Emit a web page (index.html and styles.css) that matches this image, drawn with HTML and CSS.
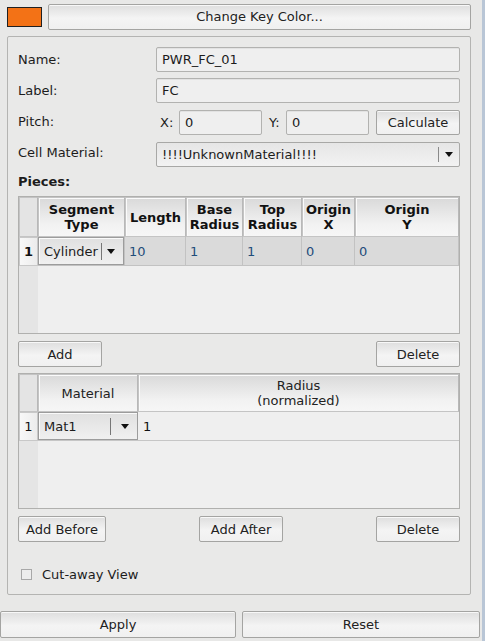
FILE: index.html
```html
<!DOCTYPE html>
<html>
<head>
<meta charset="utf-8">
<link rel="stylesheet" href="styles.css">
</head>
<body>
<div class="window">
  <div class="topbar">
    <div class="swatch"></div>
    <button class="btn wide">Change Key Color...</button>
  </div>

  <div class="group">
    <div class="form">
      <div class="lbl">Name:</div>
      <div class="input">PWR_FC_01</div>
      <div class="lbl">Label:</div>
      <div class="input">FC</div>
      <div class="lbl">Pitch:</div>
      <div class="pitch">
        <span class="xy">X:</span>
        <div class="input small">0</div>
        <span class="xy">Y:</span>
        <div class="input small">0</div>
        <button class="btn calc">Calculate</button>
      </div>
      <div class="lbl">Cell Material:</div>
      <div class="combo">
        <span class="ctext">!!!!UnknownMaterial!!!!</span>
        <span class="csep"></span>
        <span class="arrow"></span>
      </div>
    </div>

    <div class="section">Pieces:</div>

    <div class="table t1">
      <div class="thead">
        <div class="hc corner"></div>
        <div class="hc c-seg">Segment<br>Type</div>
        <div class="hc c-len">Length</div>
        <div class="hc c-base">Base<br>Radius</div>
        <div class="hc c-top">Top<br>Radius</div>
        <div class="hc c-ox">Origin<br>X</div>
        <div class="hc c-oy">Origin<br>Y</div>
      </div>
      <div class="trow grey">
        <div class="rh bold">1</div>
        <div class="cell c-seg cellcombo"><div class="incombo"><span>Cylinder</span><span class="csep"></span><span class="arrow"></span></div></div>
        <div class="cell c-len num">10</div>
        <div class="cell c-base num">1</div>
        <div class="cell c-top num">1</div>
        <div class="cell c-ox num">0</div>
        <div class="cell c-oy num">0</div>
      </div>
      <div class="tempty"><div class="rhempty"></div></div>
    </div>

    <div class="btnrow">
      <button class="btn b84">Add</button>
      <button class="btn b84">Delete</button>
    </div>

    <div class="table t2">
      <div class="thead h2">
        <div class="hc corner"></div>
        <div class="hc normal c-mat">Material</div>
        <div class="hc normal c-rad">Radius<br>(normalized)</div>
      </div>
      <div class="trow light">
        <div class="rh">1</div>
        <div class="cell c-mat cellcombo"><div class="incombo mat"><span>Mat1</span><span class="csep"></span><span class="arrow"></span></div></div>
        <div class="cell c-rad dark">1</div>
      </div>
      <div class="tempty e2"><div class="rhempty"></div></div>
    </div>

    <div class="btnrow">
      <button class="btn b88">Add Before</button>
      <button class="btn b84">Add After</button>
      <button class="btn b84">Delete</button>
    </div>

    <div class="check">
      <span class="box"></span>
      <span>Cut-away View</span>
    </div>
  </div>

  <div class="bottombar">
    <button class="btn apply">Apply</button>
    <button class="btn reset">Reset</button>
  </div>
</div>
</body>
</html>
```

FILE: styles.css
```css
* { box-sizing: border-box; }
html, body {
  margin: 0;
  padding: 0;
  width: 485px;
  height: 641px;
  overflow: hidden;
  background: #e8e8e7;
  font-family: "DejaVu Sans", sans-serif;
  font-size: 13px;
  color: #1c1c1c;
}
.window {
  width: 485px;
  height: 641px;
  border-right: 3px solid #b9c6d6;
}
.btn {
  font-family: "DejaVu Sans", sans-serif;
  font-size: 13px;
  color: #222;
  border: 1px solid #a4a4a2;
  border-radius: 2px;
  background: linear-gradient(#dedede 0%, #f4f4f4 55%, #f0f0f0 100%);
  box-shadow: inset 0 1px 0 #f8f8f8;
  height: 26px;
  padding: 0;
  margin: 0;
  text-align: center;
}
.topbar {
  display: flex;
  align-items: center;
  padding: 3px 0 0 7px;
  height: 30px;
}
.swatch {
  width: 35px;
  height: 20px;
  background: #f37216;
  border: 1px solid #202020;
}
.wide {
  margin-left: 6px;
  width: 423px;
  height: 26px;
}
.group {
  margin: 6px 0 0 7px;
  width: 464px;
  height: 559px;
  border: 1px solid #b4b4b2;
  border-radius: 2px;
  background: #e9e9e8;
  padding: 10px 10px 0 10px;
}
.form {
  display: grid;
  grid-template-columns: 138px 304px;
  grid-auto-rows: 25px;
  row-gap: 6px;
  align-items: center;
}
.form > .pitch { margin-top: 1px; }
.form > .combo { margin-top: 3px; }
.input {
  height: 25px;
  border: 1px solid #b2b2b0;
  border-radius: 2px;
  background: #efefef;
  box-shadow: inset 0 1px 0 #e2e2e2;
  padding: 0 5px;
  display: flex;
  align-items: center;
}
.pitch {
  display: flex;
  align-items: center;
  height: 25px;
}
.xy {
  width: 23px;
  padding-left: 4px;
}
.pitch .xy:nth-child(3) { width: 24px; padding-left: 7px; }
.input.small { width: 83px; }
.calc {
  margin-left: 7px;
  width: 84px;
  height: 25px;
}
.combo {
  height: 25px;
  border: 1px solid #a8a8a6;
  border-radius: 2px;
  background: linear-gradient(#e6e6e6, #f2f2f2);
  display: flex;
  align-items: center;
  padding-left: 5px;
}
.ctext { flex: 1; }
.csep {
  width: 1px;
  height: 15px;
  background: #8a8a8a;
  margin-right: 6px;
}
.arrow {
  width: 0;
  height: 0;
  border-left: 4.5px solid transparent;
  border-right: 4.5px solid transparent;
  border-top: 5px solid #111;
  margin-right: 6px;
}
.section {
  font-weight: bold;
  margin-top: 7px;
  height: 23px;
  line-height: 20px;
}
.table {
  margin-top: 1px;
  width: 442px;
  border: 1px solid #b0b0ae;
  background: #efefef;
  display: flex;
  flex-direction: column;
}
.t1 { height: 138px; }
.t2 { height: 136px; margin-top: 6px; }
.thead {
  display: flex;
  height: 40px;
  flex: none;
}
.h2 { height: 38px; }
.hc {
  border: 1px solid #c4c4c4;
  border-right-color: #b8b8b8;
  background: linear-gradient(#d9d9d9 0%, #f2f2f2 70%, #f6f6f6 100%);
  font-weight: bold;
  text-align: center;
  display: flex;
  align-items: center;
  justify-content: center;
  line-height: 15px;
  color: #111;
  box-shadow: inset 1px 1px 0 #fbfbfb;
}
.hc.normal { font-weight: normal; color: #222; }
.corner { width: 19px; flex: none; background: #e4e4e4; box-shadow: none; }
.c-seg { width: 87px; flex: none; }
.c-len { width: 61px; flex: none; }
.c-base { width: 57px; flex: none; }
.c-top { width: 59px; flex: none; }
.c-ox { width: 53px; flex: none; }
.c-oy { width: 104px; flex: none; }
.c-mat { width: 100px; flex: none; }
.c-rad { width: 321px; flex: none; }
.trow {
  display: flex;
  height: 29px;
  flex: none;
}
.grey .cell { background: #dadada; border-right: 1px solid #c2c2c2; border-bottom: 1px solid #c2c2c2; }
.light .cell { background: #efefef; border-bottom: 1px solid #c6c6c6; }
.rh {
  width: 19px;
  flex: none;
  border: 1px solid #c8c8c8;
  background: linear-gradient(90deg, #f8f8f8, #ececec);
  display: flex;
  align-items: center;
  justify-content: center;
  color: #111;
}
.rh.bold { font-weight: bold; }
.cell {
  display: flex;
  align-items: center;
  padding-left: 4px;
}
.num { color: #1f4d7a; }
.dark { color: #111; padding-left: 5px; }
.cellcombo { padding: 0; }
.incombo {
  width: 100%;
  height: 100%;
  border: 1px solid #9c9c9c;
  background: linear-gradient(#e0e0e0, #f0f0f0);
  box-shadow: inset 1px 1px 0 #fafafa;
  display: flex;
  align-items: center;
  padding-left: 5px;
}
.incombo span:first-child { flex: 1; }
.incombo .csep { height: 17px; background: #777; margin-right: 5px; }
.incombo .arrow { margin-right: 8px; }
.grey .cellcombo { background: #f0f0f0; }
.incombo.mat .csep { margin-right: 10px; }
.tempty {
  flex: 1;
  display: flex;
}
.rhempty {
  width: 19px;
  background: #e5e5e5;
}
.btnrow {
  display: flex;
  justify-content: space-between;
  margin-top: 7px;
}
.b84 { width: 84px; height: 26px; }
.b88 { width: 88px; height: 26px; }
.check {
  display: flex;
  align-items: center;
  margin-top: 24px;
  padding-left: 3px;
  height: 16px;
}
.box {
  width: 11px;
  height: 11px;
  border: 1px solid #a8a8a8;
  background: #ededed;
  margin-right: 10px;
}
.bottombar {
  display: flex;
  justify-content: space-between;
  margin-top: 16px;
  padding-right: 2px;
}
.apply { width: 236px; height: 27px; }
.reset { width: 238px; height: 27px; }
```
